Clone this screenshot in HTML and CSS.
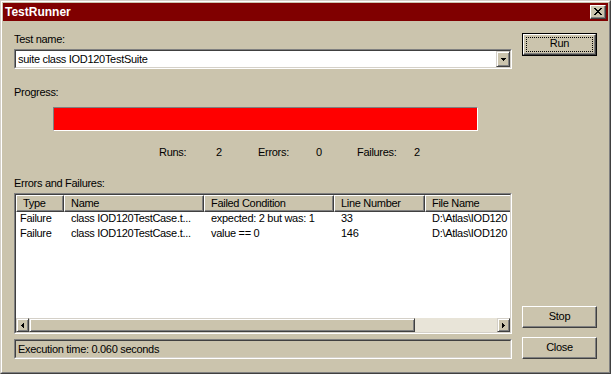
FILE: index.html
```html
<!DOCTYPE html>
<html>
<head>
<meta charset="utf-8">
<title>TestRunner</title>
<link rel="stylesheet" href="styles.css">
</head>
<body>
<div class="window">
  <div class="frame">
    <div class="titlebar">
      <span class="title">TestRunner</span>
      <span class="closebtn">
        <svg width="8" height="7" viewBox="0 0 8 7" shape-rendering="crispEdges"><path fill="#000" d="M0 0h2v1h-2zM6 0h2v1h-2zM1 1h2v1h-2zM5 1h2v1h-2zM2 2h4v1h-4zM3 3h2v1h-2zM2 4h4v1h-4zM1 5h2v1h-2zM5 5h2v1h-2zM0 6h2v1h-2zM6 6h2v1h-2z"/></svg>
      </span>
    </div>
    <div class="content">
      <div class="left">
        <div class="label label-test">Test name:</div>
        <div class="combo">
          <div class="combo-inner">
            <span class="combo-text">suite class IOD120TestSuite</span>
            <span class="dropbtn">
              <svg width="5" height="3" viewBox="0 0 5 3" shape-rendering="crispEdges"><path fill="#000" d="M0 0h5v1h-5zM1 1h3v1h-3zM2 2h1v1h-1z"/></svg>
            </span>
          </div>
        </div>
        <div class="label label-progress">Progress:</div>
        <div class="progress"></div>
        <div class="counts">
          <span>Runs:</span><span>2</span>
          <span>Errors:</span><span>0</span>
          <span>Failures:</span><span>2</span>
        </div>
        <div class="label label-errors">Errors and Failures:</div>
        <div class="listview">
          <div class="lv-inner">
            <div class="lv-header">
              <div class="hcell">Type</div>
              <div class="hcell">Name</div>
              <div class="hcell">Failed Condition</div>
              <div class="hcell">Line Number</div>
              <div class="hcell">File Name</div>
            </div>
            <div class="lv-body">
              <div class="lv-row">
                <div class="cell first">Failure</div>
                <div class="cell">class IOD120TestCase.t...</div>
                <div class="cell">expected: 2 but was: 1</div>
                <div class="cell">33</div>
                <div class="cell">D:\Atlas\IOD120</div>
              </div>
              <div class="lv-row">
                <div class="cell first">Failure</div>
                <div class="cell">class IOD120TestCase.t...</div>
                <div class="cell">value == 0</div>
                <div class="cell">146</div>
                <div class="cell">D:\Atlas\IOD120</div>
              </div>
            </div>
            <div class="hscroll">
              <span class="sb-btn">
                <svg width="3" height="5" viewBox="0 0 3 5" shape-rendering="crispEdges"><path fill="#000" d="M2 0h1v5h-1zM1 1h1v3h-1zM0 2h1v1h-1z"/></svg>
              </span>
              <span class="sb-thumb"></span>
              <span class="sb-track"></span>
              <span class="sb-btn">
                <svg width="3" height="5" viewBox="0 0 3 5" shape-rendering="crispEdges"><path fill="#000" d="M0 0h1v5h-1zM1 1h1v3h-1zM2 2h1v1h-1z"/></svg>
              </span>
            </div>
          </div>
        </div>
        <div class="status">
          <div class="status-inner">Execution time: 0.060 seconds</div>
        </div>
      </div>
      <div class="right">
        <div class="btn-run">
          <div class="btn-run-inner"><span class="focus">Run</span></div>
        </div>
        <div class="btn btn-stop">Stop</div>
        <div class="btn btn-close">Close</div>
      </div>
    </div>
  </div>
</div>
</body>
</html>
```

FILE: styles.css
```css
* {
  box-sizing: border-box;
}

html, body {
  margin: 0;
  padding: 0;
}

body {
  width: 611px;
  height: 374px;
  overflow: hidden;
  background: #cbc4ad;
  font-family: "Liberation Sans", Arial, sans-serif;
  font-size: 11px;
  letter-spacing: -0.3px;
  color: #000;
}

.window {
  width: 611px;
  height: 374px;
  border: 1px solid;
  border-color: #d4d0c8 #404040 #404040 #d4d0c8;
  background: #cbc4ad;
}

.frame {
  height: 100%;
  border: 1px solid;
  border-color: #fff #808080 #808080 #fff;
  padding: 1px;
  display: flex;
  flex-direction: column;
}

.titlebar {
  height: 18px;
  flex: none;
  background: #800000;
  display: flex;
  align-items: flex-start;
  justify-content: space-between;
  padding-left: 2px;
}

.title {
  color: #fff;
  font-weight: bold;
  font-size: 12px;
  line-height: 18px;
  letter-spacing: 0;
}

.closebtn {
  margin: 2px 2px 0 0;
  width: 16px;
  height: 14px;
  border: 1px solid;
  border-color: #fff #404040 #404040 #fff;
  box-shadow: inset -1px -1px #808080;
  background: #cbc4ad;
  display: flex;
  align-items: center;
  justify-content: center;
  padding-bottom: 1px;
}

.closebtn svg {
  display: block;
}

.content {
  flex: 1;
  display: flex;
  align-items: flex-start;
  padding-left: 11px;
}

.left {
  width: 498px;
  display: flex;
  flex-direction: column;
}

.label {
  line-height: 13px;
  height: 13px;
  white-space: nowrap;
}

.label-test {
  margin-top: 12px;
}

.combo {
  margin-top: 3px;
  height: 20px;
  border: 1px solid;
  border-color: #808080 #fff #fff #808080;
}

.combo-inner {
  height: 100%;
  border: 1px solid;
  border-color: #404040 #d4d0c8 #d4d0c8 #404040;
  background: #fff;
  display: flex;
  justify-content: space-between;
}

.combo-text {
  padding: 2px 0 0 2px;
  line-height: 13px;
  white-space: nowrap;
}

.dropbtn {
  width: 14px;
  height: 16px;
  background: #cbc4ad;
  border: 1px solid;
  border-color: #d4d0c8 #404040 #404040 #d4d0c8;
  box-shadow: inset 1px 1px #fff, inset -1px -1px #808080;
  display: flex;
  align-items: center;
  justify-content: center;
}

.dropbtn svg {
  display: block;
}

.label-progress {
  margin-top: 17px;
}

.progress {
  margin: 8px 0 0 39px;
  width: 425px;
  height: 24px;
  border: 1px solid;
  border-color: #808080 #fff #fff #808080;
  background: #ff0000;
}

.counts {
  margin: 15px 0 0 145px;
  display: grid;
  grid-template-columns: 57px 42px 58px 41px 57px auto;
  line-height: 13px;
  height: 13px;
  white-space: nowrap;
}

.label-errors {
  margin-top: 18px;
}

.listview {
  margin-top: 3px;
  height: 141px;
  border: 1px solid;
  border-color: #808080 #fff #fff #808080;
}

.lv-inner {
  height: 100%;
  border: 1px solid;
  border-color: #404040 #d4d0c8 #d4d0c8 #404040;
  background: #fff;
  display: flex;
  flex-direction: column;
  overflow: hidden;
}

.lv-header,
.lv-row {
  display: grid;
  grid-template-columns: 48px 140px 130px 91px 120px;
}

.lv-header {
  height: 17px;
  flex: none;
}

.hcell {
  background: #cbc4ad;
  border: 1px solid;
  border-color: #fff #404040 #404040 #fff;
  box-shadow: inset -1px -1px #808080;
  padding: 1px 0 0 6px;
  line-height: 13px;
  white-space: nowrap;
  overflow: hidden;
}

.lv-body {
  flex: 1;
}

.lv-row {
  height: 15px;
}

.cell {
  line-height: 13px;
  padding-left: 7px;
  white-space: nowrap;
  overflow: hidden;
}

.cell.first {
  padding-left: 4px;
}

.hscroll {
  height: 14px;
  flex: none;
  display: flex;
}

.sb-btn,
.sb-thumb {
  background: #cbc4ad;
  border: 1px solid;
  border-color: #d4d0c8 #404040 #404040 #d4d0c8;
  box-shadow: inset 1px 1px #fff, inset -1px -1px #808080;
}

.sb-btn {
  width: 13px;
  display: flex;
  align-items: center;
  justify-content: center;
}

.sb-btn svg {
  display: block;
}

.sb-thumb {
  width: 386px;
}

.sb-track {
  flex: 1;
  background: #e8e4d8;
}

.status {
  margin-top: 5px;
  height: 20px;
  border: 1px solid;
  border-color: #808080 #fff #fff #808080;
}

.status-inner {
  height: 100%;
  border: 1px solid;
  border-color: #404040 #d4d0c8 #d4d0c8 #404040;
  padding: 2px 0 0 2px;
  line-height: 13px;
  white-space: nowrap;
}

.right {
  width: 75px;
  margin-left: 10px;
  height: 338px;
  display: flex;
  flex-direction: column;
  padding-top: 12px;
}

.btn-run {
  height: 23px;
  border: 1px solid #000;
}

.btn-run-inner {
  height: 100%;
  border: 1px solid;
  border-color: #fff #404040 #404040 #fff;
  box-shadow: inset -1px -1px #808080;
  background: #cbc4ad;
  padding: 2px;
}

.focus {
  display: flex;
  height: 100%;
  border: 1px dotted #000;
  align-items: center;
  justify-content: center;
  line-height: 13px;
  padding-bottom: 2px;
}

.btn {
  height: 22px;
  background: #cbc4ad;
  border: 1px solid;
  border-color: #fff #404040 #404040 #fff;
  box-shadow: inset -1px -1px #808080;
  display: flex;
  align-items: center;
  justify-content: center;
  line-height: 13px;
  padding-bottom: 2px;
}

.btn-stop {
  margin-top: auto;
}

.btn-close {
  margin-top: 9px;
}
```
